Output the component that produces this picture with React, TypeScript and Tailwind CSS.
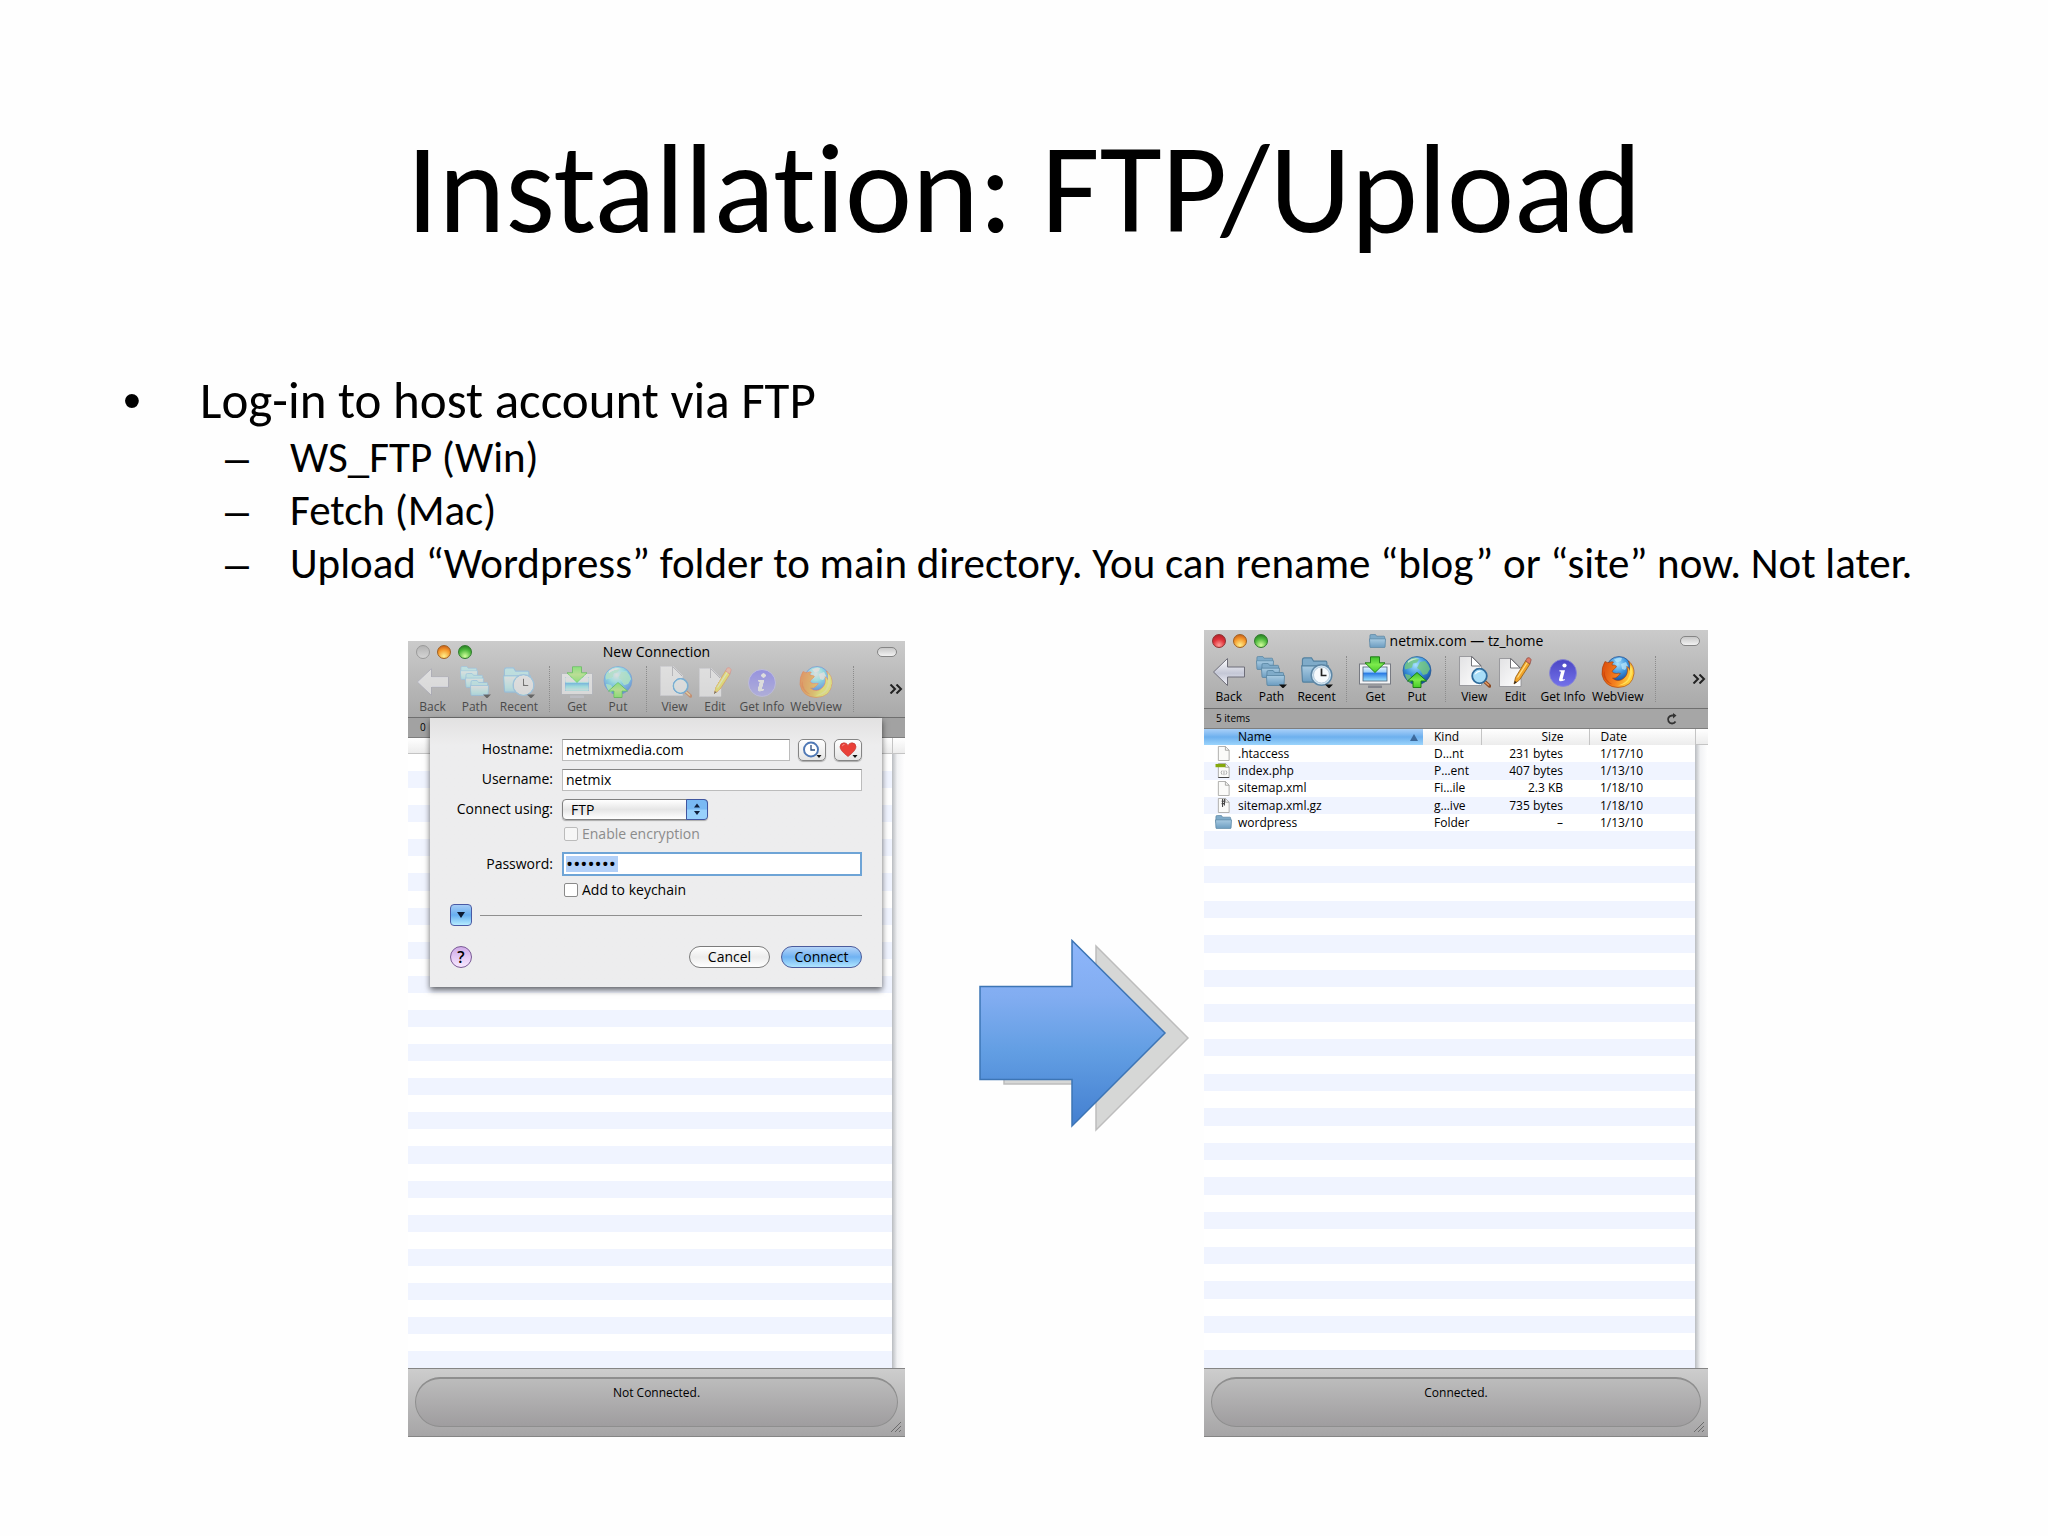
import type { ReactNode } from "react";
import clsx from "clsx";

const ROW_COUNT = 36;

const files = [
  { name: ".htaccess", kind: "D…nt", size: "231 bytes", date: "1/17/10", icon: "page" },
  { name: "index.php", kind: "P…ent", size: "407 bytes", date: "1/13/10", icon: "php" },
  { name: "sitemap.xml", kind: "Fi…ile", size: "2.3 KB", date: "1/18/10", icon: "page" },
  { name: "sitemap.xml.gz", kind: "g…ive", size: "735 bytes", date: "1/18/10", icon: "zip" },
  { name: "wordpress", kind: "Folder", size: "–", date: "1/13/10", icon: "folder" },
];

/* Shared gradients for all icons */
function IconDefs() {
  return (
    <svg className="absolute h-0 w-0" aria-hidden="true">
      <defs>
        <linearGradient id="folder" x1="0" y1="0" x2="0" y2="1">
          <stop offset="0" stopColor="#a9cbe2" />
          <stop offset="1" stopColor="#6b9cc0" />
        </linearGradient>
        <linearGradient id="silver" x1="0" y1="0" x2="0" y2="1">
          <stop offset="0" stopColor="#ffffff" />
          <stop offset="0.55" stopColor="#c4c7d6" />
          <stop offset="1" stopColor="#f4f4fa" />
        </linearGradient>
        <linearGradient id="green" x1="0" y1="0" x2="0" y2="1">
          <stop offset="0" stopColor="#3fbf2c" />
          <stop offset="0.5" stopColor="#7cea4c" />
          <stop offset="1" stopColor="#46cc28" />
        </linearGradient>
        <linearGradient id="screen" x1="0" y1="0" x2="0" y2="1">
          <stop offset="0" stopColor="#e4f4ff" />
          <stop offset="0.35" stopColor="#9fd0fa" />
          <stop offset="0.45" stopColor="#2a7be4" />
          <stop offset="1" stopColor="#9fe6ff" />
        </linearGradient>
        <radialGradient id="globe" cx="0.45" cy="0.3" r="0.75">
          <stop offset="0" stopColor="#a8e2ff" />
          <stop offset="0.5" stopColor="#3b92dc" />
          <stop offset="1" stopColor="#0f3f94" />
        </radialGradient>
        <linearGradient id="info" x1="0" y1="0" x2="0" y2="1">
          <stop offset="0" stopColor="#4b46c4" />
          <stop offset="1" stopColor="#7372ea" />
        </linearGradient>
        <linearGradient id="fox" x1="0" y1="0" x2="1" y2="0.3">
          <stop offset="0" stopColor="#d9480b" />
          <stop offset="0.6" stopColor="#f58220" />
          <stop offset="1" stopColor="#ffcf3a" />
        </linearGradient>
        <linearGradient id="paper" x1="0" y1="0" x2="1" y2="1">
          <stop offset="0" stopColor="#e2e2e4" />
          <stop offset="1" stopColor="#ffffff" />
        </linearGradient>
      </defs>
    </svg>
  );
}

function FolderShape({ x = 0, y = 0, w = 20, h = 16 }) {
  return (
    <svg x={x} y={y} width={w} height={h} viewBox="0 0 20 16" preserveAspectRatio="none">
      <path d="M1 2q0-1.500 1.500-1.500h5l1.500 2h8.500q1 0 1 1v5H1z" fill="#7fabc9" stroke="#5582a0" strokeWidth="0.800" />
      <path d="M0.500 5.500h19l-.5 9q-.1 1-1 1H2q-.9 0-1-1z" fill="url(#folder)" stroke="#5582a0" strokeWidth="0.800" />
    </svg>
  );
}

function BackIcon() {
  return (
    <svg viewBox="0 0 34 32" className="h-8 w-[34px]">
      <path d="M1.500 16 15.500 2.500V11H32.500V21H15.500V29.500Z" fill="url(#silver)" stroke="#6d6d78" strokeLinejoin="round" />
    </svg>
  );
}

function PathIcon() {
  return (
    <svg viewBox="0 0 34 32" className="h-8 w-[34px]">
      <FolderShape x={2} y={0} w={18} h={14} />
      <FolderShape x={7} y={7} w={19} h={15} />
      <FolderShape x={12} y={14} w={19} h={16} />
      <path d="M25 28.500h8l-4 4z" fill="#111" />
    </svg>
  );
}

function RecentIcon() {
  return (
    <svg viewBox="0 0 34 32" className="h-8 w-[34px]">
      <FolderShape x={1} y={1} w={28} h={26} />
      <circle cx="21.500" cy="19" r="10.300" fill="#cfe4f2" stroke="#5d86a5" strokeWidth="1.500" />
      <circle cx="21.500" cy="19" r="8" fill="#f6fafd" stroke="#a9c2d4" strokeWidth="0.800" />
      <path d="M21.500 12.500V19.500H26.500" fill="none" stroke="#222" strokeWidth="1.700" />
      <path d="M25 28.500h8l-4 4z" fill="#111" />
    </svg>
  );
}

function GetIcon() {
  return (
    <svg viewBox="0 0 34 32" className="h-8 w-[34px]">
      <rect x="10" y="29.500" width="14" height="2.500" rx="0.500" fill="#84868e" />
      <rect x="1.500" y="8" width="31" height="20" fill="#f3f4f6" stroke="#777a82" />
      <rect x="5" y="11" width="24" height="14" fill="url(#screen)" stroke="#4a5f78" strokeWidth="0.800" />
      <path d="M12.500 .8h9v6h5.500L17 16.500 7 6.800h5.500z" fill="url(#green)" stroke="#17780f" strokeWidth="0.900" strokeLinejoin="round" />
    </svg>
  );
}

function PutIcon() {
  return (
    <svg viewBox="0 0 34 32" className="h-8 w-[34px]">
      <circle cx="17" cy="14.500" r="14" fill="url(#globe)" stroke="#2a5b8f" strokeWidth="0.700" />
      <path d="M6 7q4-5 9-5.500l4 2-2 3-4 1-1 4-3 1-4 1q-1-4 1-6.500zM20 6l5-1q4 4 5 8l-3 5-4 1-3-5-3-2zM5 18l5 1 2 4-2 4q-4-3-5-9z" fill="#74c77a" opacity="0.800" />
      <path d="M8 5q5-4 12-2-7 0-12 4z" fill="#fff" opacity="0.600" />
      <path d="M17 16.500 26.500 25H21v6.500h-8V25H7.500z" fill="url(#green)" stroke="#17780f" strokeWidth="0.900" strokeLinejoin="round" />
    </svg>
  );
}

function ViewIcon() {
  return (
    <svg viewBox="0 0 34 32" className="h-8 w-[34px]">
      <path d="M2.500 .5h13l9 9V29.500h-22z" fill="url(#paper)" stroke="#8b8b90" strokeWidth="0.800" />
      <path d="M14.500 .5v9.500h9.500z" fill="#fff" stroke="#67676c" strokeWidth="0.900" />
      <path d="m27 25 5.500 5" stroke="#8a4b26" strokeWidth="3.500" strokeLinecap="round" />
      <path d="m28 26 3.500 3" stroke="#e79b62" strokeWidth="1.500" strokeLinecap="round" />
      <circle cx="22.500" cy="20" r="7.300" fill="#a9def8" stroke="#2f6c9c" strokeWidth="1.800" />
      <path d="M17.500 19q2-5 7-4-4 1-7 4z" fill="#fff" />
    </svg>
  );
}

function EditIcon() {
  return (
    <svg viewBox="0 0 34 32" className="h-8 w-[34px]">
      <path d="M1.500 2.500h12l9.500 9.500V30.500H1.500z" fill="url(#paper)" stroke="#8b8b90" strokeWidth="0.800" />
      <path d="M12.500 2.500v9.500h9.500z" fill="#fff" stroke="#67676c" strokeWidth="0.900" />
      <path d="m16 28 1.500-6.500L27.500 5l4.500 3L21.500 24z" fill="#f2a52a" stroke="#935a12" strokeWidth="0.800" />
      <path d="m19.500 21.500 10-15.500" stroke="#ffdf86" strokeWidth="1.200" />
      <path d="m27.500 5 1.700-3q2-1.300 4 1.500L32 8z" fill="#e07a64" stroke="#8a4a43" strokeWidth="0.700" />
      <path d="m16 28 .8-3 2 1.200z" fill="#222" />
    </svg>
  );
}

function InfoIcon() {
  return (
    <svg viewBox="0 0 34 32" className="h-8 w-[34px]">
      <circle cx="17" cy="17" r="13.500" fill="url(#info)" stroke="#8886d6" strokeWidth="0.800" />
      <circle cx="18.500" cy="9.500" r="2.100" fill="#fff" />
      <path d="M13.500 14.200h5.500l-2.300 8.600q-.2 1.200 2.200.2l-.3 1.200q-5.800 2.600-5.600-.8l1.900-7.200q.2-1-1.700-1z" fill="#fff" />
    </svg>
  );
}

function FirefoxIcon() {
  return (
    <svg viewBox="0 0 34 32" className="h-8 w-[34px]">
      <circle cx="18" cy="13" r="12.500" fill="url(#globe)" stroke="#123a80" strokeWidth="0.600" />
      <path d="M13 3.500q4-2.500 8-1.500l-1 3-4 1.500zM20 8l5-2 2 4-3 4-3-1z" fill="#bfe9fb" opacity="0.700" />
      <path d="M4 5.500Q6.500 7 8 6.500q2.500-1.300 4.500-.5-1.500 1.500-1.500 3 2.500-.3 4.500 1.200-.5 2-3 3.300l-1.500 2q1.500 2.200 4.500 2 2.500-.8 4 .2-1.500 1-2.500 2.600-2.500 2.400-5.500 1.900Q16 26 21 23.500q5-3 5.500-8.500.2-2-.8-4.500 3 1 3.300 4 1-5-1.500-9.500 6 5 5.500 12.500Q31.500 31 17 31.500 3.500 31 1 18.500.5 11 4 5.500z" fill="url(#fox)" stroke="#a23c08" strokeWidth="0.600" strokeLinejoin="round" />
      <path d="M29 8q4.500 8 0 15-4 6-12 6.500 9-2.500 11-9 1.500-4 .8-6.500.7-2.500.2-6z" fill="#ffe25c" />
      <path d="M3.500 15q0 9 8 13.500Q5 27 2.500 20q-.3-3 1-5z" fill="#c23a06" opacity="0.600" />
    </svg>
  );
}

function FileIcon({ type }: { type: string }) {
  if (type === "folder") {
    return (
      <svg viewBox="0 0 18 16" className="h-[15px] w-[17px]">
        <FolderShape w={18} h={15} />
      </svg>
    );
  }
  return (
    <svg viewBox="0 0 18 16" className="h-[15px] w-[17px]">
      <path d="M3.500 .5h7.500l4 4V15.500H3.500z" fill="#fbfbf9" stroke="#a3a3a0" strokeWidth="0.900" />
      <path d="M11 .5v4h4" fill="none" stroke="#8f8f8c" strokeWidth="0.800" />
      {type === "php" && (
        <>
          <rect x="0.500" y="1" width="10.500" height="3.500" fill="#84a80c" />
          <path d="M7.500 8q-2 2 0 4.500M11.500 8q2 2 0 4.500M9.500 8v5" fill="none" stroke="#9a9a9a" strokeWidth="0.900" />
          <path d="M3.500 15.500H15" stroke="#3c3c3c" />
        </>
      )}
      {type === "zip" && <path d="M8 1v8.500M10 1v7M7 3.500h3M7 6h3" stroke="#444" strokeWidth="1.100" />}
    </svg>
  );
}

function Faded({ on, children }: { on?: boolean; children: ReactNode }) {
  return <span className={clsx(on && "opacity-50 brightness-150")}>{children}</span>;
}

function ToolButton({ label, children }: { label: string; children: ReactNode }) {
  return (
    <button type="button" className="flex flex-col items-center whitespace-nowrap text-[12px] leading-[18px]">
      {children}
      {label}
    </button>
  );
}

function Separator() {
  return <div className="mx-auto h-[46px] border-l border-dotted border-[#8c8c8c]" />;
}

function Light({ className }: { className: string }) {
  return <button type="button" aria-label="Window control" className={clsx("h-[14px] w-[14px] rounded-full border", className)} />;
}

function Toolbar({ title, inactive, folder }: { title: string; inactive?: boolean; folder?: boolean }) {
  return (
    <header className={clsx("border-b border-[#6f6f6f] bg-linear-to-b from-[#cbcbcb] to-[#a9a9a9]", inactive ? "h-[77px]" : "h-[79px]")}>
      <div className="grid h-[22px] grid-cols-[1fr_auto_1fr] items-center px-2">
        <div className="flex gap-[7px]">
          {inactive ? (
            <Light className="border-[#9a9a9a] bg-linear-to-b from-[#b4b4b4] to-[#d4d4d4]" />
          ) : (
            <Light className="border-[#8d3030] bg-[radial-gradient(circle_at_50%_85%,#ff9c98,#e0323a_50%,#a51d25)]" />
          )}
          <Light className="border-[#a0601e] bg-[radial-gradient(circle_at_50%_85%,#fff08c,#f59a2c_55%,#bd4c12)]" />
          <Light className="border-[#2f7a2c] bg-[radial-gradient(circle_at_50%_85%,#d2ff9c,#4db83c_55%,#1c6d1c)]" />
        </div>
        <h2 className="flex items-center gap-1 text-[14px] leading-5">
          {folder && (
            <svg viewBox="0 0 18 16" className="h-[15px] w-[17px]">
              <FolderShape w={18} h={15} />
            </svg>
          )}
          {title}
        </h2>
        <button
          type="button"
          aria-label="Toggle toolbar"
          className="h-[10px] w-5 justify-self-end rounded-full border border-[#858585] bg-linear-to-b from-[#c8c8c8] to-[#f2f2f2]"
        />
      </div>
      <div
        className={clsx(
          "grid grid-cols-[3fr_43fr_41fr_48fr_12fr_44fr_38fr_18fr_39fr_42fr_52fr_56fr_18fr_43fr]",
          inactive ? "pt-[3px] text-[#4a4a4a]" : "pt-1",
        )}
      >
        <span />
        <ToolButton label="Back"><Faded on={inactive}><BackIcon /></Faded></ToolButton>
        <ToolButton label="Path"><Faded on={inactive}><PathIcon /></Faded></ToolButton>
        <ToolButton label="Recent"><Faded on={inactive}><RecentIcon /></Faded></ToolButton>
        <Separator />
        <ToolButton label="Get"><Faded on={inactive}><GetIcon /></Faded></ToolButton>
        <ToolButton label="Put"><Faded on={inactive}><PutIcon /></Faded></ToolButton>
        <Separator />
        <ToolButton label="View"><Faded on={inactive}><ViewIcon /></Faded></ToolButton>
        <ToolButton label="Edit"><Faded on={inactive}><EditIcon /></Faded></ToolButton>
        <ToolButton label="Get Info"><Faded on={inactive}><InfoIcon /></Faded></ToolButton>
        <ToolButton label="WebView"><Faded on={inactive}><FirefoxIcon /></Faded></ToolButton>
        <Separator />
        <button type="button" aria-label="More" className="flex items-center justify-end pr-[2px] pb-1">
          <svg viewBox="0 0 14 10" className="h-[10px] w-[14px]" fill="none" stroke="#222" strokeWidth="2">
            <path d="m1.500 .5 4.500 4.500-4.500 4.500M7.500 .5 12 5 7.500 9.500" />
          </svg>
        </button>
      </div>
    </header>
  );
}

function StatusBar({ text }: { text: string }) {
  return (
    <footer className="relative h-[69px] border-y border-[#858585] bg-linear-to-b from-[#cdcdcd] to-[#a6a5a6] px-[7px] pt-2">
      <div className="h-[50px] rounded-full border border-t-2 border-[#8e8e8e] bg-linear-to-b from-[#bcbcbc] to-[#9f9d9f] pt-[5px] text-center text-[12px] leading-[18px]">
        {text}
      </div>
      <svg viewBox="0 0 12 12" className="absolute right-[3px] bottom-[3px] h-3 w-3" stroke="#6c6c6c">
        <path d="M1 11 11 1M5 11l6-6M9 11l2-2" />
      </svg>
    </footer>
  );
}

/* Strip to the right of the list, in the shade of the window edge */
function EdgeShadow() {
  return (
    <div className="flex w-[13px] flex-col">
      <div className="h-4 border-b border-l border-[#c4c4c4] bg-linear-to-b from-white to-[#ececec]" />
      <div className="flex-1 bg-linear-to-r from-[#b9bcc0] via-[#f1f2f4] via-40% to-white" />
    </div>
  );
}

const fieldClass = "min-w-0 flex-1 border border-[#bcbcbc] border-t-[#858585] bg-white px-[3px] text-[14px] leading-5 outline-none";
const labelClass = "mr-[9px] w-[103px] text-right whitespace-nowrap";
const smallButtonClass = "flex h-[22px] w-7 items-center justify-center rounded-[5px] border border-[#858585] bg-linear-to-b from-white to-[#e4e4e4] shadow-[0_1px_1px_#aaa]";
const pillClass = "h-[22px] w-[81px] rounded-full border text-center leading-5";
const checkClass = "h-[14px] w-[14px] appearance-none rounded-[2px] border border-[#8a8a8a] bg-white";

function ConnectionForm() {
  return (
    <form
      className="absolute top-0 right-[23px] left-[22px] flex flex-col bg-[#ededee] bg-linear-to-b from-[#e2e1e1] via-[#ededee] via-10% to-[#ededee] px-5 pt-[21px] pb-[19px] text-[14px] leading-5 shadow-[0_3px_6px_rgba(0,0,0,0.6)]"
      onSubmit={(e) => e.preventDefault()}
    >
      <div className="flex h-[22px] items-stretch">
        <label htmlFor="host" className={labelClass}>Hostname:</label>
        <input id="host" defaultValue="netmixmedia.com" className={fieldClass} />
        <button type="button" aria-label="Recent connections" className={clsx(smallButtonClass, "ml-2")}>
          <svg viewBox="0 0 22 18" className="h-[18px] w-[22px]">
            <circle cx="10" cy="8.500" r="7" fill="#fff" stroke="#4f78b5" strokeWidth="1.900" />
            <path d="M10 4v5h4" fill="none" stroke="#2b4d80" strokeWidth="1.300" />
            <path d="M15.500 14h5L18 17z" fill="#111" />
          </svg>
        </button>
        <button type="button" aria-label="Favorites" className={clsx(smallButtonClass, "ml-2")}>
          <svg viewBox="0 0 22 18" className="h-[18px] w-[22px]">
            <path d="M11 15.500Q3 9.500 3 5.800 3.200 2 7 1.800q2.800 0 4 2.600 1.200-2.600 4-2.600 3.800.2 4 4Q19 9.500 11 15.500z" fill="#ea4038" stroke="#c13a34" strokeWidth="0.700" />
            <path d="M5 5.500Q5.500 3 8 3.300 6 4 5 5.500z" fill="#fff" opacity="0.800" />
            <path d="M15.500 14h5L18 17z" fill="#111" />
          </svg>
        </button>
      </div>
      <div className="mt-2 flex h-[22px]">
        <label htmlFor="user" className={labelClass}>Username:</label>
        <input id="user" defaultValue="netmix" className={fieldClass} />
      </div>
      <div className="mt-2 flex h-[21px]">
        <label htmlFor="protocol" className={labelClass}>Connect using:</label>
        <div className="relative flex w-[146px]">
          <select
            id="protocol"
            className="w-full appearance-none rounded-[4px] border border-[#808080] bg-linear-to-b from-white via-[#e6e6e6] to-white px-2 text-[14px] leading-[18px] shadow-[0_1px_1px_#aaa]"
          >
            <option>FTP</option>
          </select>
          <svg viewBox="0 0 22 21" className="pointer-events-none absolute top-0 right-0 h-[21px] w-[22px]">
            <path d="M.5 .5H18q3.500 0 3.500 3.500V17q0 3.500-3.500 3.500H.5z" fill="#79b9f3" stroke="#4056a0" />
            <path d="M1 10.500h20V17q0 3-3 3H1z" fill="#a5dcff" opacity="0.700" />
            <path d="M8 8.500h6L11 4.500zM8 12h6l-3 4z" fill="#10203c" />
          </svg>
        </div>
      </div>
      <div className="mt-[7px] ml-[114px] flex h-[14px] items-center gap-1 text-[#8b8b8b]">
        <input id="encrypt" type="checkbox" disabled className={clsx(checkClass, "opacity-50")} />
        <label htmlFor="encrypt">Enable encryption</label>
      </div>
      <div className="mt-[11px] flex h-6 items-stretch">
        <label htmlFor="pass" className={clsx(labelClass, "leading-6")}>Password:</label>
        <input
          id="pass"
          type="password"
          defaultValue="netmix1"
          className="min-w-0 flex-1 border-2 border-[#6ea4d6] bg-white bg-[linear-gradient(#b2d0f8,#b2d0f8)] bg-[length:52px_16px] bg-[position:2px_2px] bg-no-repeat px-[2px] text-[19px] outline-none"
        />
      </div>
      <div className="mt-[7px] ml-[114px] flex h-[14px] items-center gap-1">
        <input id="keychain" type="checkbox" className={checkClass} />
        <label htmlFor="keychain">Add to keychain</label>
      </div>
      <div className="mt-[7px] flex items-center gap-2">
        <button
          type="button"
          aria-label="Hide options"
          className="flex h-[22px] w-[22px] items-center justify-center rounded-[4px] border border-[#4a5aa4] bg-linear-to-b from-[#a5ccf6] via-[#66aef0] to-[#b5ecff]"
        >
          <svg viewBox="0 0 8 6" className="h-[6px] w-2">
            <path d="M0 0h8L4 6z" fill="#0c1a33" />
          </svg>
        </button>
        <div className="flex-1 border-t border-[#8f8f8f]" />
      </div>
      <div className="mt-5 flex">
        <button
          type="button"
          aria-label="Help"
          className="h-[22px] w-[22px] rounded-full border border-[#7a5a96] bg-linear-to-b from-[#cfaae8] to-[#f8e8ff] text-[16px] leading-5 font-semibold"
        >
          ?
        </button>
        <button type="button" className={clsx(pillClass, "ml-auto border-[#7c7c7c] bg-linear-to-b from-white via-[#ececec] to-white")}>
          Cancel
        </button>
        <button
          type="submit"
          className={clsx(pillClass, "ml-[11px] border-[#4c5c9c] bg-linear-to-b from-[#b5d4f8] via-[#6fb2f2] to-[#b0e6ff]")}
        >
          Connect
        </button>
      </div>
    </form>
  );
}

function ConnectionWindow() {
  return (
    <section className="flex h-[796px] flex-col">
      <Toolbar title="New Connection" inactive />
      <div className="relative flex flex-1 flex-col">
        <div className="h-5 border-b border-[#7e7e7e] bg-[#a2a2a2] pl-3 text-[10px] leading-[19px]">0</div>
        <div className="flex flex-1">
          <div className="flex flex-1 flex-col">
            <div className="h-4 border-b border-[#c4c4c4] bg-linear-to-b from-white to-[#ececec]" />
            {Array.from({ length: ROW_COUNT }, (_, i) => (
              <div key={i} className="flex-1 odd:bg-[#f0f4ff] even:bg-white" />
            ))}
          </div>
          <EdgeShadow />
        </div>
        <ConnectionForm />
      </div>
      <StatusBar text="Not Connected." />
    </section>
  );
}

function FilesWindow() {
  return (
    <section className="flex h-[807px] flex-col">
      <Toolbar title="netmix.com — tz_home" folder />
      <div className="flex h-5 items-center justify-between border-b border-[#7e7e7e] bg-[#a6a6a6] pr-[30px] pl-3 text-[10px]">
        <span>5 items</span>
        <button type="button" aria-label="Refresh">
          <svg viewBox="0 0 12 12" className="h-3 w-3" fill="none" stroke="#333" strokeWidth="1.800">
            <path d="M9.500 8.500A4 4 0 1 1 6 2.500h2.500" />
            <path d="M7 0 10.500 2.500 7 5.500z" fill="#333" stroke="none" />
          </svg>
        </button>
      </div>
      <div className="flex flex-1">
        <table className="h-full flex-1 table-fixed border-collapse text-left text-[12px] leading-4">
          <colgroup>
            <col className="w-[219px]" />
            <col className="w-[58px]" />
            <col className="w-[108px]" />
            <col />
          </colgroup>
          <thead>
            <tr className="h-4 bg-linear-to-b from-white to-[#ececec]">
              <th className="bg-linear-to-b from-[#a9d0f8] via-[#6db0ee] to-[#9bd4fb] p-0 pr-[5px] pl-[34px] font-medium">
                <div className="flex items-center justify-between">
                  Name
                  <svg viewBox="0 0 8 7" className="h-[7px] w-2">
                    <path d="M4 0 8 7H0z" fill="#3d6a9c" />
                  </svg>
                </div>
              </th>
              <th className="border-r border-[#c4c4c4] p-0 pl-[11px] font-medium">Kind</th>
              <th className="border-r border-[#c4c4c4] p-0 pr-[25px] text-right font-medium">Size</th>
              <th className="p-0 pl-[11px] font-medium">Date</th>
            </tr>
          </thead>
          <tbody>
            {Array.from({ length: ROW_COUNT }, (_, i) => {
              const file = files[i];
              return (
                <tr key={i} className="h-[17px] odd:bg-white even:bg-[#f0f4ff]">
                  {file ? (
                    <>
                      <td className="p-0 pl-[11px]">
                        <div className="flex items-center gap-[6px]">
                          <FileIcon type={file.icon} />
                          {file.name}
                        </div>
                      </td>
                      <td className="p-0 pl-[11px]">{file.kind}</td>
                      <td className="p-0 pr-[26px] text-right">{file.size}</td>
                      <td className="p-0 pl-[11px]">{file.date}</td>
                    </>
                  ) : (
                    <td colSpan={4} className="p-0" />
                  )}
                </tr>
              );
            })}
          </tbody>
        </table>
        <EdgeShadow />
      </div>
      <StatusBar text="Connected." />
    </section>
  );
}

function Arrow() {
  return (
    <svg viewBox="0 0 212 194" className="mb-[304px] ml-[74px] h-[194px] w-[212px]">
      <defs>
        <linearGradient id="arrow" x1="0" y1="0" x2="0" y2="1">
          <stop offset="0" stopColor="#8eb6fb" />
          <stop offset="0.300" stopColor="#82adf1" />
          <stop offset="0.600" stopColor="#629ee3" />
          <stop offset="1" stopColor="#437fd0" />
        </linearGradient>
      </defs>
      <path d="M25 53H117V7L209 99 117 191V145H25Z" fill="#d6d7d6" stroke="#bdbdbd" strokeWidth="1.500" />
      <path d="M1 47.500H93V1.500L186 94 93 187V140.500H1Z" fill="url(#arrow)" stroke="#3d75b5" strokeWidth="1.500" />
    </svg>
  );
}

function Dash() {
  return <span className="w-[65px] font-['Liberation_Sans',sans-serif]">–</span>;
}

export default function App() {
  return (
    <main className="min-h-screen bg-[#fefefe] text-black">
      <IconDefs />
      <div className="font-['Calibri','Carlito','Lato',sans-serif] [font-variant-ligatures:none]">
        <h1 className="pt-[123px] text-center text-[127px] leading-[132px]">Installation: FTP/Upload</h1>
        <ul className="mt-[119px] pl-[123px] text-[51px] leading-[54px]">
          <li>
            <div className="flex">
              <span className="w-[77px] font-['Liberation_Sans',sans-serif]">•</span>
              Log-in to host account via FTP
            </div>
            <ul className="mt-[3px] pl-[102px] text-[43px] leading-[53px] whitespace-nowrap">
              <li className="flex"><Dash />WS_FTP (Win)</li>
              <li className="flex"><Dash />Fetch (Mac)</li>
              <li className="flex">
                <Dash />
                Upload “Wordpress” folder to main directory. You can rename “blog” or “site” now. Not later.
              </li>
            </ul>
          </li>
        </ul>
      </div>
      <div className="mt-10 mr-[340px] ml-[408px] grid grid-cols-[497fr_299fr_504fr] items-end font-['Open_Sans',sans-serif]">
        <ConnectionWindow />
        <Arrow />
        <FilesWindow />
      </div>
    </main>
  );
}
